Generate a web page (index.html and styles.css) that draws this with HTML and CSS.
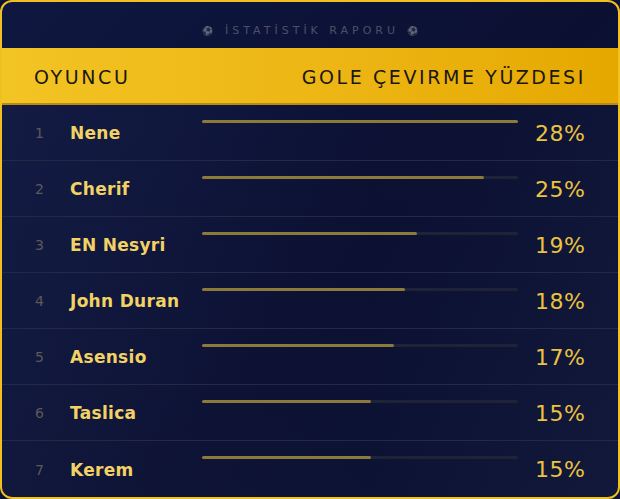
FILE: index.html
```html
<!DOCTYPE html>
<html lang="tr">
<head>
<meta charset="utf-8">
<link rel="stylesheet" href="styles.css">
</head>
<body>
<div class="card">
  <div class="title"><span class="ball">⚽</span> İSTATİSTİK RAPORU <span class="ball">⚽</span></div>
  <div class="head">
    <span>OYUNCU</span>
    <span class="head-right">GOLE ÇEVIRME YÜZDESI</span>
  </div>
  <div class="rows">
    <div class="row"><span class="rank">1</span><span class="name">Nene</span><div class="track"><div class="fill" style="width:100%"></div></div><span class="pct">28%</span></div>
    <div class="row"><span class="rank">2</span><span class="name">Cherif</span><div class="track"><div class="fill" style="width:89.3%"></div></div><span class="pct">25%</span></div>
    <div class="row"><span class="rank">3</span><span class="name">EN Nesyri</span><div class="track"><div class="fill" style="width:67.9%"></div></div><span class="pct">19%</span></div>
    <div class="row"><span class="rank">4</span><span class="name">John Duran</span><div class="track"><div class="fill" style="width:64.3%"></div></div><span class="pct">18%</span></div>
    <div class="row"><span class="rank">5</span><span class="name">Asensio</span><div class="track"><div class="fill" style="width:60.7%"></div></div><span class="pct">17%</span></div>
    <div class="row"><span class="rank">6</span><span class="name">Taslica</span><div class="track"><div class="fill" style="width:53.6%"></div></div><span class="pct">15%</span></div>
    <div class="row"><span class="rank">7</span><span class="name">Kerem</span><div class="track"><div class="fill" style="width:53.6%"></div></div><span class="pct">15%</span></div>
  </div>
</div>
</body>
</html>
```

FILE: styles.css
```css
html, body {
  margin: 0;
  padding: 0;
  background: #0c1232;
}
.card {
  box-sizing: border-box;
  width: 620px;
  height: 499px;
  border: 2px solid #f0c020;
  border-radius: 12px;
  overflow: hidden;
  background: linear-gradient(135deg, #0f1740 0%, #0b1032 55%, #0e1536 100%);
  font-family: "DejaVu Sans", sans-serif;
}
.title {
  box-sizing: border-box;
  height: 46px;
  padding: 22px 0 0 4px;
  line-height: 14px;
  text-align: center;
  font-size: 11px;
  letter-spacing: 4px;
  color: #8a8c98;
  opacity: 0.5;
  white-space: pre;
}
.ball {
  font-size: 9px;
  opacity: 0.7;
}
.head {
  box-sizing: border-box;
  height: 57px;
  display: flex;
  align-items: center;
  justify-content: space-between;
  padding: 3px 32px 0 32px;
  background: linear-gradient(90deg, #f2c424 0%, #ecb412 60%, #e5a800 100%);
  border-bottom: 2px solid #b88a14;
  font-size: 19px;
  letter-spacing: 2.6px;
  color: #1a1712;
}
.rows {
  display: flex;
  flex-direction: column;
}
.row {
  box-sizing: border-box;
  height: 56px;
  display: grid;
  grid-template-columns: 36px 132px 316px 1fr;
  align-items: center;
  padding: 1px 33px 0 32px;
  border-bottom: 1px solid #242a46;
  background: linear-gradient(90deg, rgba(40,50,90,0.2) 0%, rgba(20,25,60,0.05) 60%, rgba(40,50,90,0.12) 100%);
}
.row:last-child {
  border-bottom: none;
}
.rank {
  font-size: 14px;
  color: #5c5a58;
  padding-left: 1px;
}
.name {
  font-size: 17px;
  font-weight: bold;
  color: #f2d264;
  letter-spacing: 0.3px;
}
.track {
  align-self: start;
  margin-top: 14px;
  height: 3px;
  border-radius: 2px;
  background: #1e2338;
}
.fill {
  height: 3px;
  border-radius: 2px;
  background: #8c7a3a;
}
.pct {
  text-align: right;
  font-size: 22px;
  letter-spacing: 0.5px;
  margin-right: -0.5px;
  color: #ecc23e;
}
```
